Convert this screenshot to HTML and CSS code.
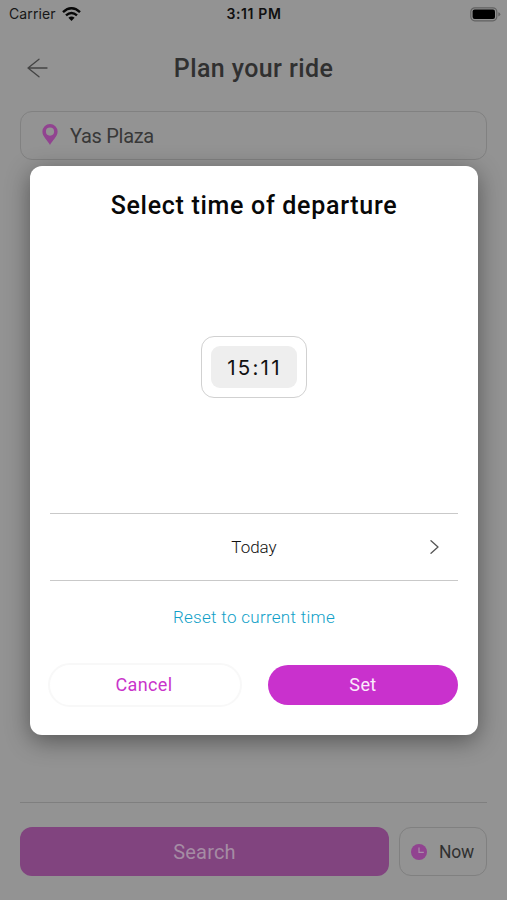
FILE: index.html
```html
<!DOCTYPE html>
<html lang="en">
<head>
<meta charset="utf-8">
<meta name="viewport" content="width=device-width, initial-scale=1">
<title>Plan your ride</title>
<link rel="stylesheet" href="styles.css">
</head>
<body>
<div class="screen">
  <div class="status">
    <div class="carrier"><span>Carrier</span>
      <svg width="19" height="14" viewBox="0 0 19 14" fill="none" stroke="#080808"><path d="M1 5.1Q9.5-2.5 18 5.1" stroke-width="2.5"/><path d="M4 8.4Q9.5 3.4 15 8.4" stroke-width="2.4"/><path d="M6.4 10.8Q9.5 8 12.6 10.8L9.5 14Z" fill="#080808" stroke="none"/></svg>
    </div>
    <span class="clock">3:11 PM</span>
    <svg class="battery" width="31" height="15" viewBox="0 0 31 15"><rect x=".8" y=".8" width="26" height="13" rx="4" fill="none" stroke="#626262" stroke-width="1.2"/><rect x="2.6" y="2.6" width="22.4" height="9.4" rx="2" fill="#000"/><path d="M28.3 5.2q2 .5 2 2.1t-2 2.1z" fill="#626262"/></svg>
  </div>
  <header class="header">
    <svg class="back" width="22" height="20" viewBox="0 0 22 20" fill="none" stroke="#444" stroke-width="1.3" stroke-linecap="round" stroke-linejoin="round"><path d="M20 10H1M12 1.200L1 10l11 8.800"/></svg>
    <h1 class="title">Plan your ride</h1>
  </header>
  <div class="place">
    <svg width="16" height="21" viewBox="0 0 16 21"><path fill="#914390" fill-rule="evenodd" d="M8 0a7.600 7.600 0 0 0-7.600 7.600C.4 12.800 5.700 16.500 8 21c2.300-4.500 7.600-8.200 7.600-13.400A7.600 7.600 0 0 0 8 0Zm0 3.500a4.100 4.100 0 1 1 0 8.200 4.100 4.100 0 0 1 0-8.200Z"/></svg>
    <span class="place-name">Yas Plaza</span>
  </div>
  <footer class="actions">
    <div class="search"><span>Search</span></div>
    <div class="now">
      <svg width="16" height="16" viewBox="0 0 16 16"><circle cx="8" cy="8" r="8" fill="#914390"/><path d="M8 3.400V8.400h4.800" fill="none" stroke="#a98da9" stroke-width="1.200"/></svg>
      <span>Now</span>
    </div>
  </footer>
</div>
<div class="overlay">
  <section class="dialog">
    <h2 class="dialog-title">Select time of departure</h2>
    <div class="picker"><div class="time-frame"><div class="time"><span>15:11</span></div></div></div>
    <div class="day"><span class="day-name">Today</span>
      <svg class="chevron" width="9" height="14" viewBox="0 0 9 14" fill="none" stroke="#555" stroke-width="1.300" stroke-linecap="round" stroke-linejoin="round"><path d="M1 .8l7 6.200-7 6.200"/></svg>
    </div>
    <div class="reset"><span>Reset to current time</span></div>
    <div class="buttons">
      <div class="button cancel"><span>Cancel</span></div>
      <div class="button set"><span>Set</span></div>
    </div>
  </section>
</div>
</body>
</html>
```
FILE: styles.css
```css
* { box-sizing: border-box; }
body { margin: 0; font-family: Roboto, "Liberation Sans", sans-serif; }
h1, h2 { margin: 0; font-weight: 500; }
svg { display: block; flex: none; }
.screen { height: 900px; background: #939393; display: flex; flex-direction: column; }
.status { height: 28px; display: grid; grid-template-columns: 1fr auto 1fr; align-items: center; padding: 0 6px 0 7px; font-family: Inter, sans-serif; font-size: 14px; line-height: 28px; color: #171717; }
.carrier { display: flex; align-items: center; gap: 6px; padding-left: 2px; letter-spacing: .12px; }
.clock { font-weight: 600; color: #101010; letter-spacing: .65px; }
.battery { justify-self: end; }
.header { height: 83px; display: grid; grid-template-columns: 60px 1fr 60px; align-items: center; padding: 0 0 3px; }
.back { margin-left: 27px; }
.title { text-align: center; font-size: 25px; line-height: 30px; letter-spacing: .4px; padding-top: 2px; color: #303030; }
.place { flex: none; height: 49px; margin: 0 20px; border: 1px solid #818181; border-radius: 12px; display: flex; align-items: center; padding: 0 21px; gap: 12px; font-size: 20px; letter-spacing: -.3px; color: #383838; }
.place svg { margin-top: -2px; }
.actions { margin: auto 20px 24px; border-top: 1px solid #7f7f7f; padding-top: 24px; display: flex; gap: 10px; }
.search { flex: 1; height: 49px; border-radius: 12px; background: #81447f; color: #a58ca4; font-size: 20px; display: flex; align-items: center; justify-content: center; letter-spacing: .2px; }
.now { width: 88px; height: 49px; border: 1px solid #808080; border-radius: 12px; display: flex; align-items: center; padding: 0 11px; gap: 12px; font-size: 17.5px; line-height: 24px; letter-spacing: -.2px; color: #303030; }
.overlay { position: absolute; inset: 0; padding: 166px 29px 165px 30px; }
.dialog { height: 569px; border-radius: 12px; background: #fff; box-shadow: 0 6px 24px rgba(0,0,0,.42); padding: 0 20px 0 20px; display: flex; flex-direction: column; }
.dialog-title { height: 77px; line-height: 79px; text-align: center; font-size: 25px; letter-spacing: .7px; color: #080808; }
.picker { height: 270px; display: flex; justify-content: center; padding-top: 93px; }
.time-frame { width: 106px; height: 62px; margin-right: 1px; border: 1px solid #d1d1d1; border-radius: 13px; padding: 9px; }
.time { height: 42px; border-radius: 9px; background: #eee; display: flex; align-items: center; justify-content: center; font-family: Inter, sans-serif; font-size: 20.5px; letter-spacing: 2.2px; padding-left: 2px; color: #111; }
.day { height: 68px; border-top: 1px solid #c9c9c9; border-bottom: 1px solid #c9c9c9; display: grid; grid-template-columns: 40px 1fr 40px; align-items: center; font-size: 17px; font-weight: 300; color: #111; }
.day-name { grid-column: 2; text-align: center; }
.chevron { justify-self: end; margin-right: 19px; }
.reset { height: 72px; line-height: 72px; text-align: center; font-size: 17px; font-weight: 300; letter-spacing: .3px; color: #119fc8; }
.buttons { display: flex; justify-content: space-between; align-items: center; margin: 10px 0 0 -2px; }
.button { display: flex; align-items: center; justify-content: center; font-size: 18px; line-height: 22px; padding-bottom: 1px; letter-spacing: .4px; }
.cancel { width: 194px; height: 44px; border: 2px solid #f8f8f8; border-radius: 22px; padding-right: 2px; color: #c934ca; }
.set { width: 190px; height: 40px; border-radius: 20px; background: #c931cd; color: #fbeafb; }
```
